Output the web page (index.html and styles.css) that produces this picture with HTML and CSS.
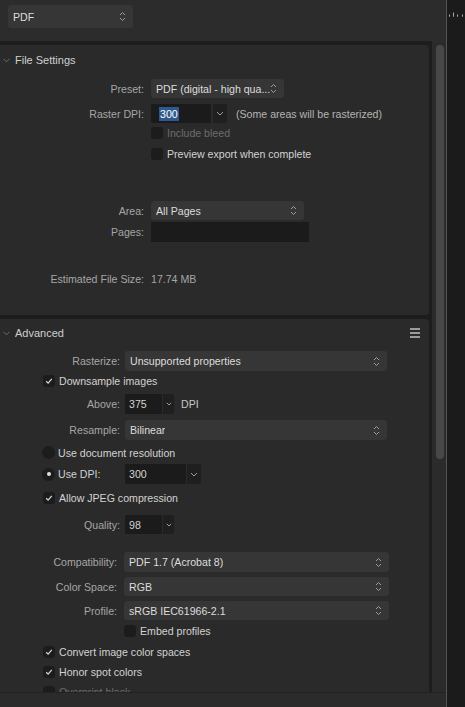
FILE: index.html
```html
<!DOCTYPE html>
<html>
<head>
<meta charset="utf-8">
<link rel="stylesheet" href="styles.css">
</head>
<body>
<div class="app">
  <div class="main">
    <div class="topbar">
      <div class="sel top-sel"><span>PDF</span>
        <svg class="ud" width="7" height="11" viewBox="0 0 7 11"><path d="M1 4 L3.5 1.5 L6 4 M1 7 L3.5 9.5 L6 7"/></svg>
      </div>
    </div>
    <div class="scrollarea">
      <div class="content">
        <div class="card fs">
          <div class="head">
            <svg class="chev" width="7" height="5" viewBox="0 0 7 5"><path d="M0.5 0.8 L3.5 3.8 L6.5 0.8"/></svg>
            <span>File Settings</span>
          </div>
          <div class="row r-preset">
            <span class="lbl">Preset:</span>
            <div class="sel w133"><span>PDF (digital - high qua...</span>
              <svg class="ud" width="7" height="11" viewBox="0 0 7 11"><path d="M1 4 L3.5 1.5 L6 4 M1 7 L3.5 9.5 L6 7"/></svg>
            </div>
          </div>
          <div class="row r-raster">
            <span class="lbl">Raster DPI:</span>
            <div class="inp w60 pl8"><span class="hl">300</span></div>
            <div class="arr w14"><svg class="dn" width="8" height="5" viewBox="0 0 8 5"><path d="M1 1 L4 4 L7 1"/></svg></div>
            <span class="note">(Some areas will be rasterized)</span>
          </div>
          <div class="row chk r-bleed">
            <span class="box"></span><span class="dis">Include bleed</span>
          </div>
          <div class="row chk r-preview">
            <span class="box"></span><span class="val">Preview export when complete</span>
          </div>
          <div class="row r-area">
            <span class="lbl">Area:</span>
            <div class="sel w153"><span>All Pages</span>
              <svg class="ud" width="7" height="11" viewBox="0 0 7 11"><path d="M1 4 L3.5 1.5 L6 4 M1 7 L3.5 9.5 L6 7"/></svg>
            </div>
          </div>
          <div class="row r-pages">
            <span class="lbl">Pages:</span>
            <div class="inp w158"></div>
          </div>
          <div class="row r-est">
            <span class="lbl">Estimated File Size:</span>
            <span class="lblv">17.74 MB</span>
          </div>
        </div>

        <div class="card adv">
          <div class="head">
            <svg class="chev" width="7" height="5" viewBox="0 0 7 5"><path d="M0.5 0.8 L3.5 3.8 L6.5 0.8"/></svg>
            <span>Advanced</span>
            <span class="burger"><i></i><i></i><i></i></span>
          </div>
          <div class="row r-rast">
            <span class="lbl">Rasterize:</span>
            <div class="sel w261"><span>Unsupported properties</span>
              <svg class="ud" width="7" height="11" viewBox="0 0 7 11"><path d="M1 4 L3.5 1.5 L6 4 M1 7 L3.5 9.5 L6 7"/></svg>
            </div>
          </div>
          <div class="row chk2 r-down">
            <span class="box"><svg width="12" height="12" viewBox="0 0 12 12"><path d="M3.2 6.3 L5.1 8.1 L8.8 3.9"/></svg></span><span class="val">Downsample images</span>
          </div>
          <div class="row r-above">
            <span class="lbl">Above:</span>
            <div class="inp w37 pl4"><span class="val">375</span></div>
            <div class="arr w11 g1"><svg class="dn" width="6" height="4" viewBox="0 0 6 4"><path d="M0.8 0.8 L3 3 L5.2 0.8"/></svg></div>
            <span class="dpi">DPI</span>
          </div>
          <div class="row r-resample">
            <span class="lbl">Resample:</span>
            <div class="sel w261"><span>Bilinear</span>
              <svg class="ud" width="7" height="11" viewBox="0 0 7 11"><path d="M1 4 L3.5 1.5 L6 4 M1 7 L3.5 9.5 L6 7"/></svg>
            </div>
          </div>
          <div class="row rad r-docres">
            <span class="radio"></span><span class="val">Use document resolution</span>
          </div>
          <div class="row rad r-usedpi">
            <span class="radio on"><i></i></span><span class="val usedpi">Use DPI:</span>
            <div class="inp w61 pl4"><span class="val">300</span></div>
            <div class="arr w14 g1"><svg class="dn" width="8" height="5" viewBox="0 0 8 5"><path d="M1 1 L4 4 L7 1"/></svg></div>
          </div>
          <div class="row chk2 r-jpeg">
            <span class="box"><svg width="12" height="12" viewBox="0 0 12 12"><path d="M3.2 6.3 L5.1 8.1 L8.8 3.9"/></svg></span><span class="val">Allow JPEG compression</span>
          </div>
          <div class="row r-quality">
            <span class="lbl">Quality:</span>
            <div class="inp w37 pl4"><span class="val">98</span></div>
            <div class="arr w11 g1"><svg class="dn" width="6" height="4" viewBox="0 0 6 4"><path d="M0.8 0.8 L3 3 L5.2 0.8"/></svg></div>
          </div>
          <div class="row grp2 r-compat">
            <span class="lbl">Compatibility:</span>
            <div class="sel w265"><span>PDF 1.7 (Acrobat 8)</span>
              <svg class="ud" width="7" height="11" viewBox="0 0 7 11"><path d="M1 4 L3.5 1.5 L6 4 M1 7 L3.5 9.5 L6 7"/></svg>
            </div>
          </div>
          <div class="row grp2 r-cs">
            <span class="lbl">Color Space:</span>
            <div class="sel w265"><span>RGB</span>
              <svg class="ud" width="7" height="11" viewBox="0 0 7 11"><path d="M1 4 L3.5 1.5 L6 4 M1 7 L3.5 9.5 L6 7"/></svg>
            </div>
          </div>
          <div class="row grp2 r-prof">
            <span class="lbl">Profile:</span>
            <div class="sel w265"><span>sRGB IEC61966-2.1</span>
              <svg class="ud" width="7" height="11" viewBox="0 0 7 11"><path d="M1 4 L3.5 1.5 L6 4 M1 7 L3.5 9.5 L6 7"/></svg>
            </div>
          </div>
          <div class="row chk3 r-embed">
            <span class="box"></span><span class="val">Embed profiles</span>
          </div>
          <div class="row chk2 r-conv">
            <span class="box"><svg width="12" height="12" viewBox="0 0 12 12"><path d="M3.2 6.3 L5.1 8.1 L8.8 3.9"/></svg></span><span class="val">Convert image color spaces</span>
          </div>
          <div class="row chk2 r-honor">
            <span class="box"><svg width="12" height="12" viewBox="0 0 12 12"><path d="M3.2 6.3 L5.1 8.1 L8.8 3.9"/></svg></span><span class="val">Honor spot colors</span>
          </div>
          <div class="row chk2 r-over">
            <span class="box"></span><span class="dis">Overprint black</span>
          </div>
        </div>
      </div>
      <div class="track"><div class="thumb"></div></div>
    </div>
    <div class="bottombar"></div>
  </div>
  <div class="side">
    <svg width="18" height="20" viewBox="0 0 18 20"><path d="M2.5 14.5 V16.7 M6.5 12.5 V16.7 M10.5 14.5 V16.7 M15.5 14.5 V16.7"/></svg>
  </div>
</div>
</body>
</html>
```

FILE: styles.css
```css
html, body {
  margin: 0;
  padding: 0;
  background: #2c2c2c;
}
body {
  width: 465px;
  height: 707px;
  overflow: hidden;
  font-family: "Liberation Sans", Arial, sans-serif;
  font-size: 10.6px;
  color: #d8d8d8;
  white-space: nowrap;
}
.app {
  display: flex;
  height: 707px;
}
.main {
  width: 446px;
  display: flex;
  flex-direction: column;
}
.side {
  width: 18px;
  border-left: 1px solid #545454;
  background: #1b1b1b;
}
.side svg path {
  stroke: #a8a8a8;
  stroke-width: 1;
  fill: none;
}
.topbar {
  height: 41px;
  background: #2c2c2c;
  padding: 5px 0 0 8px;
  box-sizing: border-box;
}
.top-sel {
  width: 125px;
  height: 23px;
  background: #333333;
}
.scrollarea {
  height: 651px;
  display: flex;
  background: #1d1d1d;
  overflow: hidden;
}
.content {
  width: 429px;
  padding-top: 4px;
  display: flex;
  flex-direction: column;
  gap: 4px;
}
.track {
  width: 14px;
  margin-left: 3px;
  background: #2b2b2b;
  padding: 4px 4px 0 4px;
  box-sizing: border-box;
}
.thumb {
  width: 8px;
  height: 414px;
  border-radius: 4px;
  background: #484848;
}
.bottombar {
  flex: 1;
  background: #2b2b2b;
  border-top: 1px solid #222;
}
.card {
  background: #2a2a2a;
  border-radius: 0 4px 4px 0;
  flex-shrink: 0;
}
.fs {
  padding-bottom: 29px;
}
.head {
  display: flex;
  align-items: center;
  height: 30px;
  padding-left: 3px;
  color: #cfcfcf;
  font-size: 11px;
}
.adv .head {
  height: 28px;
}
.chev {
  margin-right: 5px;
  margin-top: 1px;
}
.chev path {
  stroke: #6e6e6e;
  stroke-width: 1;
  fill: none;
}
.burger {
  margin-left: auto;
  margin-right: 9px;
  display: flex;
  flex-direction: column;
  gap: 2px;
}
.burger i {
  display: block;
  width: 10px;
  height: 2px;
  background: #9a9a9a;
}
.row {
  display: flex;
  align-items: center;
}
.lbl {
  color: #a6a6a6;
  text-align: right;
  flex-shrink: 0;
}
.fs .lbl {
  width: 144px;
  margin-right: 7px;
}
.adv .lbl {
  width: 120px;
  margin-right: 5px;
}
.adv .grp2 .lbl {
  width: 117px;
  margin-right: 7px;
}
.lblv {
  color: #a6a6a6;
}
.val {
  color: #d2d2d2;
}
.dis {
  color: #6c6c6c;
}
.note {
  color: #b4b4b4;
  margin-left: 9px;
}
.dpi {
  color: #c8c8c8;
  margin-left: 7px;
}
.sel {
  display: flex;
  align-items: center;
  justify-content: space-between;
  background: #363636;
  border-radius: 3px;
  padding: 0 7px 0 5px;
  box-sizing: border-box;
  color: #dddddd;
  overflow: hidden;
}
.sel span {
  overflow: hidden;
}
.ud {
  flex-shrink: 0;
}
.ud path {
  stroke: #9c9c9c;
  stroke-width: 1;
  fill: none;
}
.dn path {
  stroke: #9c9c9c;
  stroke-width: 1;
  fill: none;
}
.inp {
  background: #1b1b1b;
  border-radius: 2px 0 0 2px;
  height: 100%;
  box-sizing: border-box;
  display: flex;
  align-items: center;
}
.pl8 { padding-left: 8px; }
.pl4 { padding-left: 4px; }
.arr {
  background: #1f1f1f;
  height: 100%;
  margin-left: 2px;
  border-radius: 0 2px 2px 0;
  display: flex;
  align-items: center;
  justify-content: center;
}
.arr.g1 { margin-left: 1px; }
.hl {
  background: #2c5a8e;
  color: #ffffff;
  padding: 1px 1px;
}
.w133 { width: 133px; height: 100%; }
.w153 { width: 153px; height: 100%; }
.w158 { width: 158px; }
.w261 { width: 262px; height: 100%; }
.w265 { width: 265px; height: 100%; }
.w60 { width: 60px; }
.w61 { width: 61px; }
.w37 { width: 37px; }
.w14 { width: 14px; }
.w11 { width: 11px; }

.box {
  width: 12px;
  height: 12px;
  border-radius: 3px;
  background: #1c1c1c;
  margin-right: 4px;
  flex-shrink: 0;
  display: block;
}
.box svg {
  display: block;
}
.box svg path {
  stroke: #d4d4d4;
  stroke-width: 1.3;
  fill: none;
}
.chk { padding-left: 151px; height: 12px; }
.chk2 { padding-left: 43px; height: 12px; }
.chk3 { padding-left: 124px; height: 12px; }
.rad { padding-left: 42px; }
.radio {
  width: 13px;
  height: 13px;
  border-radius: 50%;
  background: #1c1c1c;
  margin-right: 3px;
  flex-shrink: 0;
  display: flex;
  align-items: center;
  justify-content: center;
}
.radio.on i {
  display: block;
  width: 4px;
  height: 4px;
  border-radius: 50%;
  background: #e0e0e0;
}
.usedpi {
  width: 67px;
}

/* vertical rhythm: File Settings */
.r-preset { margin-top: 4px; height: 19px; }
.r-raster { margin-top: 6px; height: 19px; }
.r-bleed { margin-top: 4px; }
.r-preview { margin-top: 9px; }
.r-area { margin-top: 41px; height: 19px; }
.r-pages { margin-top: 2px; height: 20px; }
.r-pages .inp { border-radius: 0; }
.r-est { margin-top: 30px; height: 14px; }

/* vertical rhythm: Advanced */
.r-rast { margin-top: 4px; height: 20px; }
.r-down { margin-top: 4px; }
.r-above { margin-top: 7px; height: 20px; }
.r-resample { margin-top: 6px; height: 20px; }
.r-docres { margin-top: 6px; height: 13px; }
.r-usedpi { margin-top: 5px; height: 20px; }
.r-jpeg { margin-top: 8px; }
.r-quality { margin-top: 11px; height: 19px; }
.r-compat { margin-top: 18px; height: 20px; }
.r-cs { margin-top: 5px; height: 19px; }
.r-prof { margin-top: 5px; height: 19px; }
.r-embed { margin-top: 5px; }
.r-conv { margin-top: 9px; }
.r-honor { margin-top: 8px; }
.r-over { margin-top: 8px; }
```
